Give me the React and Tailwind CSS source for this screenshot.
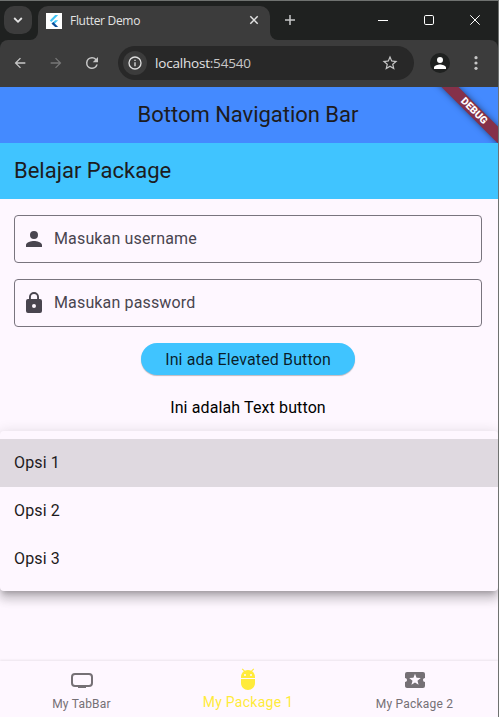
const Icon = ({ d, className }) => (
  <svg viewBox="0 0 24 24" className={className} fill="currentColor">
    <path d={d} />
  </svg>
);

function TabStrip() {
  return (
    <div className="flex h-[39px] bg-[#1f2120] text-[#e3e3e3]">
      <div className="ml-1 mt-[5px] grid h-7 w-7 place-items-center rounded-[10px] bg-[#3c3c3c]">
        <svg viewBox="0 0 10 10" className="h-2.5 w-2.5" fill="none" stroke="currentColor" strokeWidth="1.8">
          <path d="M1.2 3 5 6.8 8.8 3" />
        </svg>
      </div>
      <div className="flex w-2 items-end ml-[-2px]">
        <div className="h-2 w-2 bg-[#3c3c3c]">
          <div className="h-2 w-2 rounded-br-lg bg-[#1f2120]" />
        </div>
      </div>
      <div className="flex h-[34px] mt-[5px] w-[232px] items-start rounded-t-[10px] bg-[#3c3c3c] pl-2">
        <svg viewBox="0 0 16 16" className="mt-[7px] h-4 w-4 bg-white">
          <path d="M9.2 2h3L5.3 8.9 3.8 7.4z" fill="#42c5f5" />
          <path d="M9.2 7.2h3L8.6 10.8 6.1 10.8 5.4 10.8z" fill="#42c5f5" />
          <path d="M5.6 10.8 7.3 9.1 12.2 14h-3z" fill="#0b4f9c" />
        </svg>
        <span className="ml-2 mt-[5px] w-[179px] text-[12px] leading-[19px] tracking-[-0.3px] font-['Open_Sans',sans-serif]">Flutter Demo</span>
        <svg viewBox="0 0 10 10" className="mt-[9px] h-[10px] w-[10px]" fill="none" stroke="currentColor" strokeWidth="1.5">
          <path d="m1.3 1.3 7.4 7.4m0-7.4L1.3 8.7" />
        </svg>
      </div>
      <div className="flex w-2 items-end">
        <div className="h-2 w-2 bg-[#3c3c3c]">
          <div className="h-2 w-2 rounded-bl-lg bg-[#1f2120]" />
        </div>
      </div>
      <svg viewBox="0 0 12 12" className="ml-[6px] mt-[13px] h-3 w-3" fill="none" stroke="#c7c7c7" strokeWidth="1.5">
        <path d="M6 1v10M1 6h10" />
      </svg>
      <div className="ml-auto mr-[18px] mt-[14px] flex gap-9 text-white">
        <svg viewBox="0 0 10 10" className="h-2.5 w-2.5" stroke="currentColor"><path d="M0 5.5h10" /></svg>
        <svg viewBox="0 0 10 10" className="h-2.5 w-2.5" fill="none" stroke="currentColor"><rect x=".5" y=".5" width="9" height="9" rx="1.3" /></svg>
        <svg viewBox="0 0 10 10" className="h-2.5 w-2.5" stroke="currentColor"><path d="m.3.3 9.4 9.4m0-9.4L.3 9.7" /></svg>
      </div>
    </div>
  );
}

function Toolbar() {
  return (
    <div className="bg-[#1f2120]">
      <div className="flex h-[47px] items-center rounded-t-lg bg-[#3c3c3c] pb-px text-[#c7c7c7]">
        <Icon className="ml-3 h-4 w-4" d="M20 11H7.83l5.59-5.59L12 4l-8 8 8 8 1.41-1.41L7.83 13H20z" />
        <Icon className="ml-5 h-4 w-4 text-[#777]" d="m12 4-1.41 1.41L16.17 11H4v2h12.17l-5.58 5.59L12 20l8-8z" />
        <Icon className="ml-[19px] h-[18px] w-[18px] -mr-0.5" d="M17.65 6.35A7.96 7.96 0 0 0 12 4a8 8 0 1 0 7.73 10h-2.08A6 6 0 1 1 12 6c1.66 0 3.14.69 4.22 1.78L13 11h7V4z" />
        <div className="ml-[19px] flex h-[34px] w-[296px] items-center rounded-full bg-[#282828] pl-[5px]">
          <div className="grid h-6 w-6 place-items-center rounded-full bg-[#3c3c3c]">
            <Icon className="h-4 w-4 text-[#dedede]" d="M11 17h2v-6h-2zm1-15a10 10 0 1 0 0 20 10 10 0 0 0 0-20m0 18a8 8 0 1 1 0-16 8 8 0 0 1 0 16M11 9h2V7h-2z" />
          </div>
          <span className="ml-[8px] w-[226px] text-[13.5px] leading-5 tracking-[-0.2px] text-[#e3e3e3] font-['Open_Sans',sans-serif]">
            localhost<span className="text-[#c7c7c7]">:54540</span>
          </span>
          <Icon className="h-[18px] w-[18px]" d="m22 9.24-7.19-.62L12 2 9.19 8.63 2 9.24l5.46 4.73L5.82 21 12 17.27 18.18 21l-1.63-7.03zM12 15.4l-3.76 2.27 1-4.28-3.32-2.88 4.38-.38L12 6.1l1.71 4.04 4.38.38-3.32 2.88 1 4.28z" />
        </div>
        <div className="ml-4 grid h-5 w-5 place-items-center rounded-full bg-[#1f2120] text-white">
          <Icon className="h-[18px] w-[18px]" d="M12 12a4 4 0 1 0 0-8 4 4 0 0 0 0 8m0 2c-2.67 0-8 1.34-8 4v2h16v-2c0-2.66-5.33-4-8-4" />
        </div>
        <svg viewBox="0 0 4 14" className="ml-6 h-3.5 w-1" fill="currentColor">
          <circle cx="2" cy="1.7" r="1.6" /><circle cx="2" cy="7" r="1.6" /><circle cx="2" cy="12.3" r="1.6" />
        </svg>
      </div>
    </div>
  );
}

function Field({ icon, label }) {
  return (
    <div className="flex h-12 items-center rounded border border-[#79747e] pl-[7px] text-[#49454f]">
      <Icon className="h-6 w-6" d={icon} />
      <span className="ml-2 text-base tracking-[0.15px]">{label}</span>
    </div>
  );
}

function NavItem({ icon, label, active }) {
  if (active) {
    return (
      <div className="flex w-[170px] flex-col items-center pt-[6px] text-[#ffeb3b]">
        <Icon className="h-6 w-6" d={icon} />
        <span className="text-[14px] leading-[22px] tracking-[0.28px]">{label}</span>
      </div>
    );
  }
  return (
    <div className="flex w-[163px] flex-col items-center pt-[7px] text-[#757075]">
      <Icon className="h-6 w-6" d={icon} />
      <span className="mt-[2px] text-[12px] leading-[20px] tracking-[0.22px]">{label}</span>
    </div>
  );
}

export default function App() {
  return (
    <div className="flex h-[717px] w-[499px] flex-col overflow-hidden border-r border-t border-[#6f7270] bg-[#fef7ff] font-[Roboto,sans-serif] text-[#1d1b20]">
      <TabStrip />
      <Toolbar />
      <header className="relative h-14 shrink-0 overflow-hidden bg-[#448aff]">
        <h1 className="-ml-0.5 text-center text-[22px] leading-[56px] tracking-[-0.03px]">Bottom Navigation Bar</h1>
        <div className="absolute right-[-27.5px] top-[17.5px] h-3 w-[104px] rotate-45 bg-[#853149] text-center text-[10.2px] font-black leading-3 text-white shadow-[0_0_6px_rgba(0,0,0,0.5)]">DEBUG</div>
      </header>
      <h2 className="h-14 shrink-0 bg-[#40c4ff] pl-3.5 text-[22px] leading-[56px]">Belajar Package</h2>
      <main className="flex flex-col">
        <div className="flex flex-col gap-4 pb-4 pl-3.5 pr-4 pt-4">
          <Field label="Masukan username" icon="M12 12a4 4 0 1 0 0-8 4 4 0 0 0 0 8m0 2c-2.67 0-8 1.34-8 4v2h16v-2c0-2.66-5.33-4-8-4" />
          <Field label="Masukan password" icon="M18 8h-1V6A5 5 0 0 0 7 6v2H6a2 2 0 0 0-2 2v10a2 2 0 0 0 2 2h12a2 2 0 0 0 2-2V10a2 2 0 0 0-2-2m-6 9a2 2 0 1 1 0-4 2 2 0 0 1 0 4m3.1-9H8.9V6a3.1 3.1 0 0 1 6.2 0z" />
        </div>
        <button className="ml-[141px] h-8 w-[214px] rounded-full bg-[#40c4ff] pt-0.5 text-base leading-[30px] tracking-[0.12px] text-black/85 shadow-[0_1px_1px_rgba(0,0,0,0.25)]">Ini ada Elevated Button</button>
        <button className="mt-4 h-8 w-[496px] pt-0.5 text-base leading-[30px] tracking-[0.12px] text-black">Ini adalah Text button</button>
        <ul className="mt-2 h-40 rounded-sm bg-[#fef7ff] py-2 text-base tracking-[0.15px] shadow-[0_5px_5px_-3px_rgba(0,0,0,0.2),0_8px_10px_1px_rgba(0,0,0,0.14),0_3px_14px_2px_rgba(0,0,0,0.12)]">
          <li className="h-12 bg-[#dfd9e0] pl-3.5 leading-[48px]">Opsi 1</li>
          <li className="h-12 pl-3.5 leading-[48px]">Opsi 2</li>
          <li className="h-12 pl-3.5 leading-[48px]">Opsi 3</li>
        </ul>
      </main>
      <nav className="mt-auto flex h-14 shrink-0 bg-[#fef7ff] shadow-[0_-1px_2px_rgba(0,0,0,0.08)]">
        <NavItem label="My TabBar" icon="M19 5H5a4 4 0 0 0-4 4v6a4 4 0 0 0 4 4h3v1h8v-1h3a4 4 0 0 0 4-4V9a4 4 0 0 0-4-4m2 10a2 2 0 0 1-2 2H5a2 2 0 0 1-2-2V9a2 2 0 0 1 2-2h14a2 2 0 0 1 2 2z" />
        <NavItem active label="My Package 1" icon="M5 16c0 3.87 3.13 7 7 7s7-3.13 7-7v-4H5zM16.12 4.37l2.1-2.1-.82-.83-2.3 2.31C14.16 3.28 13.12 3 12 3s-2.16.28-3.09.75L6.6 1.44l-.82.83 2.1 2.1C6.14 5.64 5 7.68 5 10v1h14v-1c0-2.32-1.14-4.36-2.88-5.63M9 9a1 1 0 1 1 0-2 1 1 0 0 1 0 2m6 0a1 1 0 1 1 0-2 1 1 0 0 1 0 2" />
        <NavItem label="My Package 2" icon="M20 12c0-1.1.9-2 2-2V6a2 2 0 0 0-2-2H4a2 2 0 0 0-2 2v4c1.1 0 2 .9 2 2s-.9 2-2 2v4c0 1.1.9 2 2 2h16a2 2 0 0 0 2-2v-4a2 2 0 0 1-2-2m-4.42 4.8L12 14.5l-3.58 2.3 1.08-4.12-3.29-2.69 4.24-.25L12 5.8l1.54 3.95 4.24.25-3.29 2.69z" />
      </nav>
    </div>
  );
}
